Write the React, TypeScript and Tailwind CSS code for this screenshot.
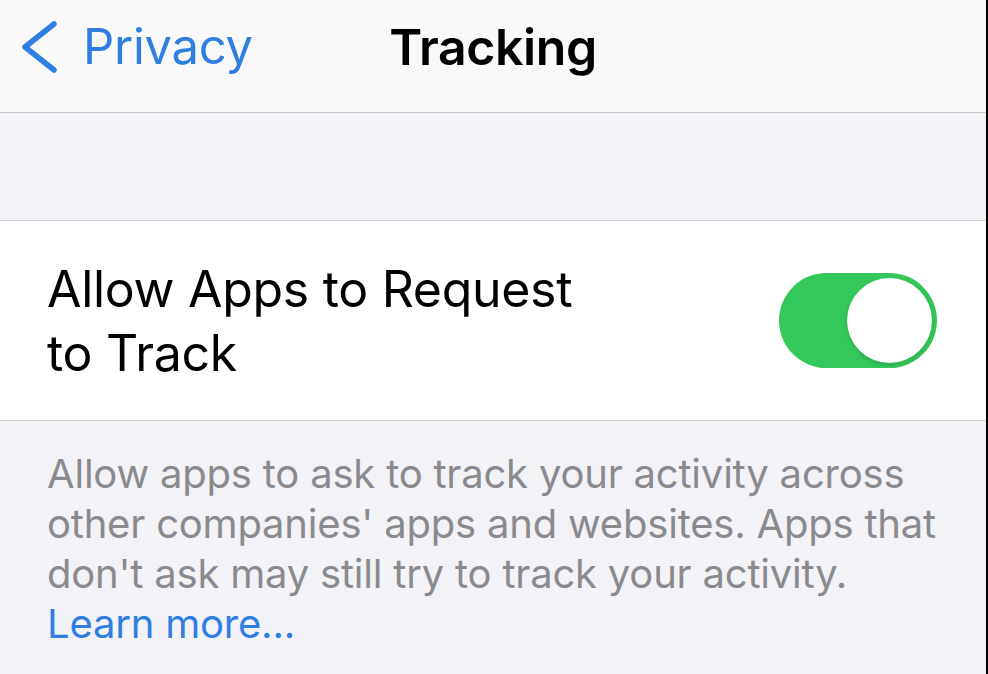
import React from "react";

export default function App() {
  return (
    <div className="w-[988px] h-[674px] flex overflow-hidden font-['Inter','Liberation_Sans',sans-serif]">
      <div className="flex-1 flex flex-col">
        <header className="h-[113px] shrink-0 bg-[#f9f9f9] border-b border-[#c3c3c6] grid grid-cols-[1fr_auto_1fr] items-start pt-[14px]">
          <div className="flex items-center pl-[19px] h-[66px]">
            <svg width="40" height="56" viewBox="0 0 40 56" fill="none">
              <path d="M35 5 L6 28 L35 51" stroke="#2f7ee0" strokeWidth="5.5" strokeLinecap="round" strokeLinejoin="round" />
            </svg>
            <span className="ml-[24px] text-[49px] leading-[66px] text-[#2f7ee0] tracking-[-0.3px]">Privacy</span>
          </div>
          <div className="h-[66px] flex items-center">
            <span className="text-[50px] leading-[66px] font-semibold text-black tracking-[-0.4px]">Tracking</span>
          </div>
          <div />
        </header>
        <div className="h-[108px] shrink-0 bg-[#f2f2f7] border-b border-[#cfcfd3]" />
        <div className="h-[200px] shrink-0 bg-white border-b border-[#cfcfd3] flex items-center justify-between pl-[47px] pr-[49px]">
          <div className="text-[50px] leading-[64px] text-black tracking-[-0.3px]">
            Allow Apps to Request
            <br />
            to Track
          </div>
          <div className="w-[158px] h-[95px] rounded-full bg-[#34c759] flex items-center justify-end pr-[5px]">
            <div className="w-[85px] h-[85px] rounded-full bg-white shadow-[0_2px_4px_rgba(0,0,0,0.15)]" />
          </div>
        </div>
        <div className="flex-1 bg-[#f2f2f7] pl-[47px] pt-[28px] text-[40px] leading-[50px] text-[#8a8a8e] tracking-[-0.2px]">
          <p>Allow apps to ask to track your activity across</p>
          <p>other companies' apps and websites. Apps that</p>
          <p>don't ask may still try to track your activity.</p>
          <p className="text-[#2f7ee0]">Learn more...</p>
        </div>
      </div>
      <div className="w-[2px] bg-black shrink-0" />
    </div>
  );
}
